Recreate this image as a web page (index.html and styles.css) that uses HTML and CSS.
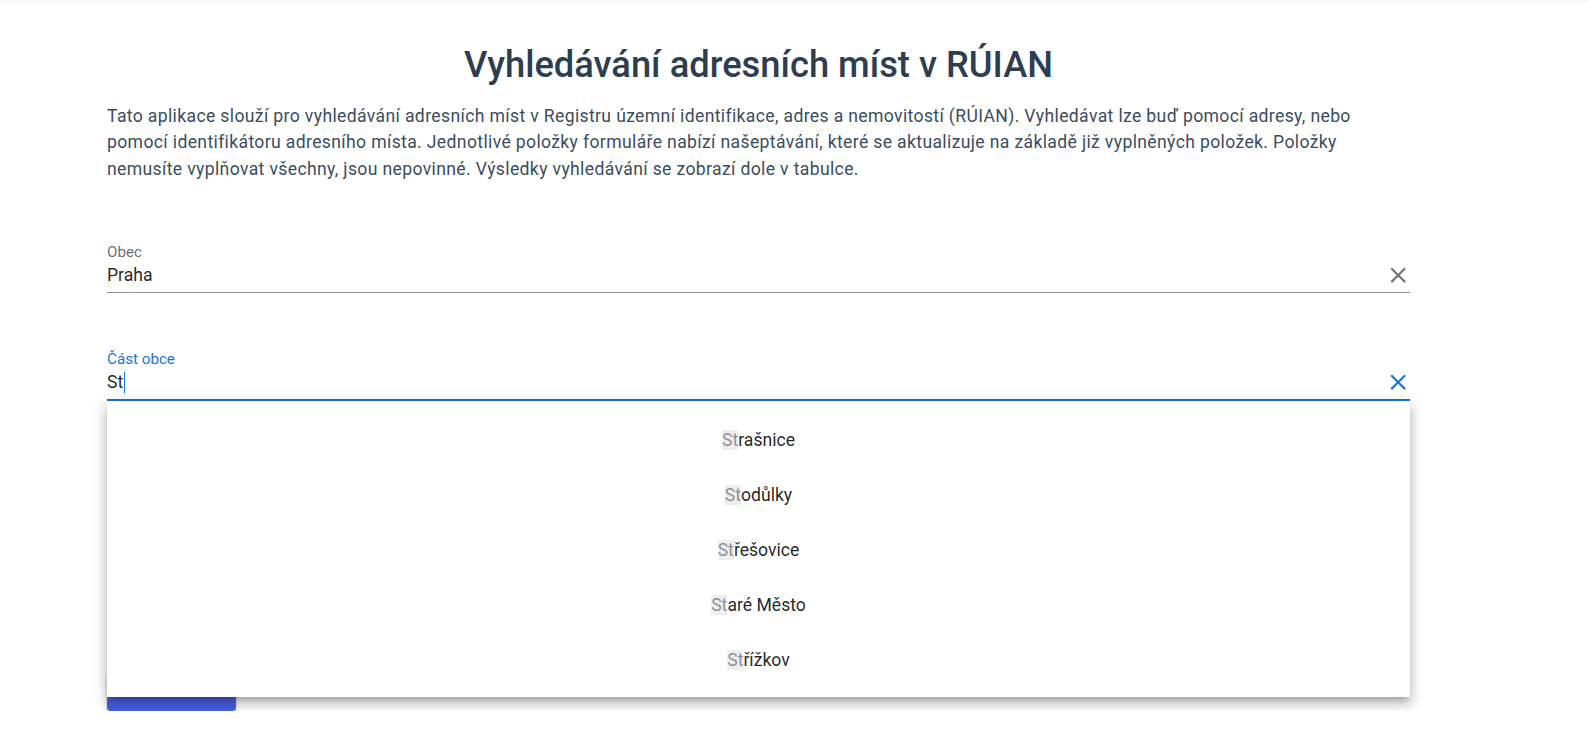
FILE: index.html
```html
<!DOCTYPE html>
<html lang="cs">
<head>
<meta charset="utf-8">
<title>Vyhledávání adresních míst v RÚIAN</title>
<link rel="stylesheet" href="styles.css">
</head>
<body>
<div class="topbar"></div>
<main class="container">
  <h1 class="title">Vyhledávání adresních míst v RÚIAN</h1>
  <p class="intro">Tato aplikace slouží pro vyhledávání adresních míst v Registru územní identifikace, adres a nemovitostí (RÚIAN). Vyhledávat lze buď pomocí adresy, nebo<br>pomocí identifikátoru adresního místa. Jednotlivé položky formuláře nabízí našeptávání, které se aktualizuje na základě již vyplněných položek. Položky<br>nemusíte vyplňovat všechny, jsou nepovinné. Výsledky vyhledávání se zobrazí dole v tabulce.</p>

  <div class="field field-first">
    <label class="field-label">Obec</label>
    <div class="field-row">
      <span class="field-value">Praha</span>
      <svg class="clear" viewBox="0 0 24 24"><path d="M19,6.41L17.59,5L12,10.59L6.41,5L5,6.41L10.59,12L5,17.59L6.41,19L12,13.41L17.59,19L19,17.59L13.41,12L19,6.41Z"/></svg>
    </div>
  </div>

  <div class="field field-focused">
    <label class="field-label">Část obce</label>
    <div class="field-row">
      <span class="field-value">St<span class="caret"></span></span>
      <svg class="clear" viewBox="0 0 24 24"><path d="M19,6.41L17.59,5L12,10.59L6.41,5L5,6.41L10.59,12L5,17.59L6.41,19L12,13.41L17.59,19L19,17.59L13.41,12L19,6.41Z"/></svg>
    </div>
    <ul class="menu">
      <li class="menu-item"><span class="hl">St</span>rašnice</li>
      <li class="menu-item"><span class="hl">St</span>odůlky</li>
      <li class="menu-item"><span class="hl">St</span>řešovice</li>
      <li class="menu-item"><span class="hl">St</span>aré Město</li>
      <li class="menu-item"><span class="hl">St</span>řížkov</li>
    </ul>
  </div>

  <div class="actions">
    <button class="btn" type="button">Vyhledat</button>
  </div>
</main>
</body>
</html>
```

FILE: styles.css
```css
html, body {
  margin: 0;
  padding: 0;
  background: #ffffff;
}

body {
  font-family: Roboto, "Liberation Sans", sans-serif;
  color: #2c3e50;
  overflow: hidden;
}

.topbar {
  height: 0;
  box-shadow: 0 0 4px 1px rgba(0, 0, 0, 0.08);
}

.container {
  width: 1303px;
  margin-left: 107px;
  padding-top: 42px;
}

.title {
  margin: 0;
  text-align: center;
  font-size: 36.3px;
  line-height: 45px;
  font-weight: 500;
  color: #2c3e50;
}

.intro {
  margin: 16px 0 0;
  font-size: 17.6px;
  line-height: 26.4px;
  letter-spacing: 0.35px;
  color: #3b4d5e;
  white-space: nowrap;
}

.field {
  position: relative;
  margin-top: 58px;
  border-bottom: 1px solid rgba(0, 0, 0, 0.42);
}

.field-first {
  margin-top: 62px;
}

.field-label {
  display: block;
  font-size: 15.2px;
  line-height: 16px;
  color: rgba(0, 0, 0, 0.6);
}

.field-row {
  display: flex;
  align-items: center;
  justify-content: space-between;
  height: 30px;
  padding-bottom: 2px;
}

.field-value {
  font-size: 17.6px;
  line-height: 30px;
  color: rgba(0, 0, 0, 0.87);
  display: flex;
  align-items: center;
}

.clear {
  width: 26.4px;
  height: 26.4px;
  margin-right: -1px;
  fill: rgba(0, 0, 0, 0.54);
}

.field-focused {
  border-bottom: 2px solid #1976d2;
}

.field-focused .field-label {
  color: #1976d2;
}

.field-focused .clear {
  fill: #1976d2;
}

.caret {
  display: inline-block;
  width: 1px;
  height: 21px;
  margin-left: 1px;
  background: #1976d2;
}

.menu {
  position: absolute;
  top: 100%;
  left: 0;
  right: 0;
  z-index: 5;
  list-style: none;
  margin: 2px 0 0;
  padding: 11px 0 10px;
  background: #ffffff;
  box-shadow: 0 5px 5px -3px rgba(0, 0, 0, 0.2), 0 8px 10px 1px rgba(0, 0, 0, 0.14), 0 3px 14px 2px rgba(0, 0, 0, 0.12);
}

.menu-item {
  height: 55px;
  display: flex;
  align-items: center;
  justify-content: center;
  font-size: 17.6px;
  color: rgba(0, 0, 0, 0.87);
}

.hl {
  background: #eeeeee;
  color: rgba(0, 0, 0, 0.42);
}

.actions {
  margin-top: 270px;
}

.btn {
  width: 129px;
  height: 40px;
  border: 0;
  border-radius: 4px;
  background: #4a5fe6;
  color: #ffffff;
  font-family: Roboto, "Liberation Sans", sans-serif;
  font-size: 15.4px;
  font-weight: 500;
  text-transform: uppercase;
  box-shadow: 0 3px 1px -2px rgba(0, 0, 0, 0.2), 0 2px 2px 0 rgba(0, 0, 0, 0.14), 0 1px 5px 0 rgba(0, 0, 0, 0.12);
}
```
